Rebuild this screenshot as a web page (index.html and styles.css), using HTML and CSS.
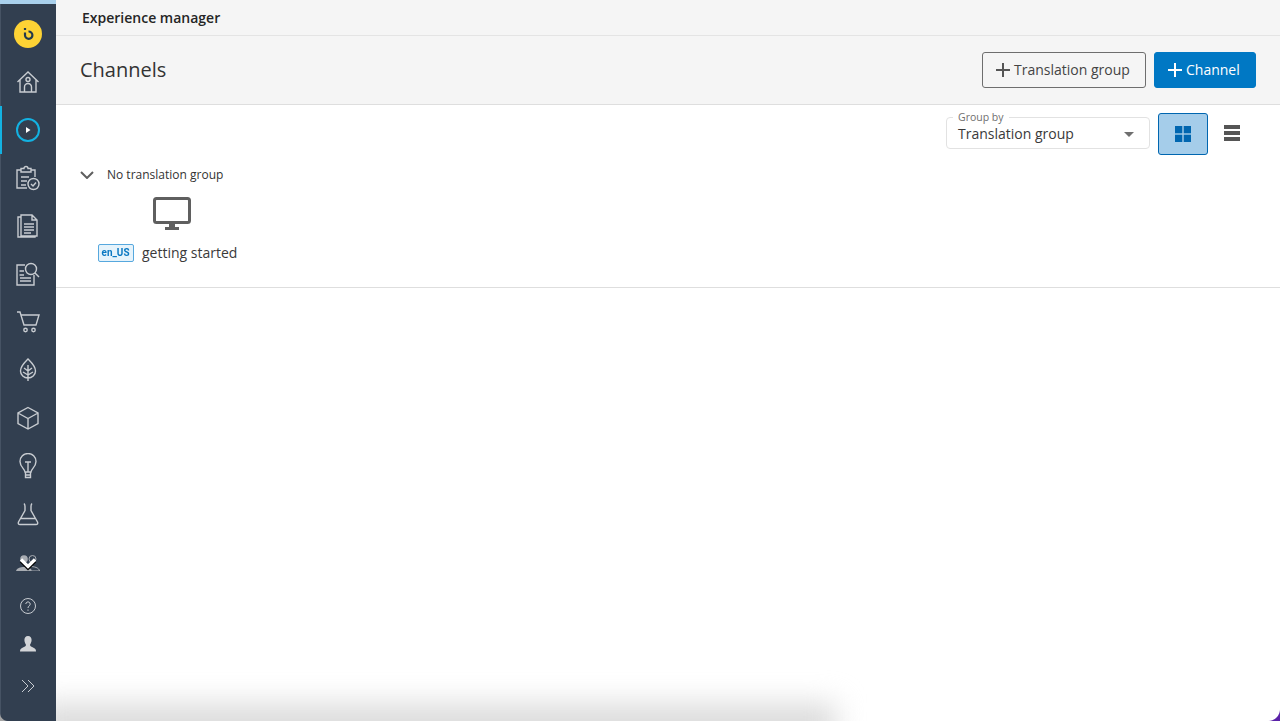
FILE: index.html
```html
<!DOCTYPE html>
<html lang="en">
<head>
<meta charset="utf-8">
<title>Channels</title>
<link rel="stylesheet" href="styles.css">
</head>
<body>
<div class="app">
  <nav class="sidebar">
    <div class="nav-main">
      <div class="nav-item"><svg class="logo" width="28" height="28" viewBox="0 0 28 28"><circle cx="14" cy="14" r="14" fill="#fdd335"/><path d="M11 8v2" stroke="#233a4d" stroke-width="2.200" fill="none"/><path d="M14.500 11.500a3.700 3.700 0 1 1-3.500 3.700v-2.700" stroke="#233a4d" stroke-width="2.200" fill="none"/></svg></div>
      <div class="nav-item"><svg class="ic" width="24" height="24" viewBox="0 0 24 24"><path d="M1.500 12 12 2l10.500 10M4 10v12h16V10M8.500 22v-5a3.500 3.500 0 0 1 7 0v5"/><circle cx="12" cy="9.500" r="2"/></svg></div>
      <div class="nav-item active"><svg width="24" height="24" viewBox="0 0 24 24"><circle cx="12" cy="12" r="11" fill="none" stroke="#13b2e2" stroke-width="2"/><path d="M10 9l4.500 3-4.500 3z" fill="#fff"/></svg></div>
      <div class="nav-item"><svg class="ic" width="24" height="26" viewBox="0 0 24 26"><path d="M11 23H1V5h4M15 5h4v7M5 3.500h3a2 2 0 0 1 4 0h3v3.500H5zM5 12h8M5 16h6M5 20h5"/><circle cx="17.500" cy="19" r="5.500"/><path d="M15 19l2 2 3-3.500"/></svg></div>
      <div class="nav-item"><svg class="ic" width="22" height="24" viewBox="0 0 22 24"><path d="M1 3h3v19h14v1H1zM4 1h11l5 5v16H4zM15 1v5h5M7 10h10M7 13h10M7 16h10M7 19h7"/></svg></div>
      <div class="nav-item"><svg class="ic" width="24" height="24" viewBox="0 0 24 24"><path d="M9 3H1v20h17V13M3.500 9H8M3.500 13H8M4 16h11M4 19h11"/><circle cx="15" cy="7" r="5.500"/><path d="M19 11l4 4"/></svg></div>
      <div class="nav-item"><svg class="ic" width="24" height="22" viewBox="0 0 24 22"><path d="M1 1h3l4 13h12l3-10H5"/><circle cx="9.500" cy="19" r="1.700"/><circle cx="17.500" cy="19" r="1.700"/></svg></div>
      <div class="nav-item"><svg class="ic" width="18" height="24" viewBox="0 0 18 24"><path d="M9 1C6 4 1.500 8 1.500 13c0 4 3.500 7 7.500 7s7.500-3 7.500-7C16.500 8 12 4 9 1zM9 7v16M9 13 5 10M9 13l4-3M9 17l-5-3M9 17l5-3"/></svg></div>
      <div class="nav-item"><svg class="ic" width="24" height="24" viewBox="0 0 24 24"><path d="M12 1.500 22 7v10.500l-10 5.500-10-5.500V7zM2 7l10 5.500L22 7M12 12.500V23"/></svg></div>
      <div class="nav-item"><svg class="ic" width="18" height="26" viewBox="0 0 18 26"><path d="M6 19c0-3-5-5-5-10.500a8 8 0 0 1 16 0C17 14 12 16 12 19zM6.500 19v5.500h5V19M6.500 22h5M6 9h6M9 9v10"/></svg></div>
      <div class="nav-item"><svg class="ic" width="22" height="24" viewBox="0 0 22 24"><path d="M7 1.500c1 1 1 2 1 3v4L1.500 20c-.6 1.500 0 2.500 1.500 2.500h16c1.500 0 2.100-1 1.500-2.500L14 8.500v-4c0-1 0-2 1-3M4 16.500h14"/></svg></div>
      <div class="nav-item nav-clip">
        <svg class="ic-dim" width="24" height="17" viewBox="0 0 24 17"><circle cx="8" cy="5" r="3.800" fill="#a9adb3"/><path d="M0 17c1-3 4-4 8-4s7 1 8 4z" fill="#a9adb3"/><circle cx="16.500" cy="5" r="3.500" fill="none" stroke="#a9adb3"/><path d="M14 12.500c4 0 9 1 9.500 4.500H16" fill="none" stroke="#a9adb3"/></svg>
        <svg class="more" width="20" height="16" viewBox="0 0 20 16"><path d="M3 4l7 7 7-7" fill="none" stroke="#000" stroke-width="3.500"/><path d="M3 2.500l7 7 7-7" fill="none" stroke="#fff" stroke-width="3.200"/></svg>
      </div>
    </div>
    <div class="nav-bottom">
      <svg class="ic-thin" width="18" height="18" viewBox="0 0 18 18"><circle cx="9" cy="9" r="7.500"/><path d="M6.800 7a2.200 2.200 0 1 1 3.300 2c-.8.500-1.100 1-1.100 2M9 12.500v1.300"/></svg>
      <svg class="user" width="18" height="18" viewBox="0 0 18 18"><path d="M9 1c2.500 0 3.600 2 3.600 4S11.500 9 11 9.800c0 1.500 1.500 2 3.500 3 2 .8 2.500 1.700 2.500 3.700H1c0-2 .5-2.900 2.500-3.700 2-1 3.500-1.500 3.500-3C6.500 9 5.400 7 5.400 5S6.500 1 9 1z" fill="#d3d5d8"/></svg>
      <svg class="ic-thin chev" width="14" height="14" viewBox="0 0 14 14"><path d="M1 1l6 6-6 6M7 1l6 6-6 6"/></svg>
    </div>
    <span class="corner-left"></span>
  </nav>
  <main class="main">
    <div class="appbar">Experience manager</div>
    <header class="page-head">
      <h1 class="title">Channels</h1>
      <div class="actions">
        <button class="btn btn-outline"><svg width="16" height="16" viewBox="0 0 16 16"><path d="M8 1v14M1 8h14" stroke="#555" stroke-width="2"/></svg><span class="btn-text">Translation group</span></button>
        <button class="btn btn-primary"><svg width="16" height="16" viewBox="0 0 16 16"><path d="M8 1v14M1 8h14" stroke="#fff" stroke-width="2"/></svg><span class="btn-text">Channel</span></button>
      </div>
    </header>
    <div class="toolbar">
      <div class="select">
        <span class="select-label">Group by</span>
        <span class="select-value">Translation group</span>
        <span class="caret"></span>
      </div>
      <button class="view view-on"><svg width="16" height="16" viewBox="0 0 16 16" fill="#0066b0"><rect width="7.300" height="7.300"/><rect x="8.700" width="7.300" height="7.300"/><rect y="8.700" width="7.300" height="7.300"/><rect x="8.700" y="8.700" width="7.300" height="7.300"/></svg></button>
      <button class="view view-list"><svg width="16" height="16" viewBox="0 0 16 16" fill="#555"><rect width="16" height="4"/><rect y="6" width="16" height="4"/><rect y="12" width="16" height="4"/></svg></button>
    </div>
    <section class="group">
      <div class="group-head">
        <svg width="14" height="8" viewBox="0 0 14 8"><path d="M1 1l6 6 6-6" fill="none" stroke="#5f5f5f" stroke-width="2"/></svg>
        <span>No translation group</span>
      </div>
      <div class="card">
        <svg class="monitor" width="38" height="35" viewBox="0 0 38 35"><rect x="1.500" y="1.500" width="35" height="24" rx="2" fill="none" stroke="#5f5f5f" stroke-width="3"/><path d="M16 26h6v4h-6zM12 30h14v3H12z" fill="#5f5f5f"/></svg>
        <div class="card-label"><span class="locale"><span class="locale-text">en_US</span></span><span class="card-name">getting started</span></div>
      </div>
    </section>
    <div class="bottom-shade"></div>
    <span class="corner-right"></span>
  </main>
</div>
</body>
</html>
```
FILE: styles.css
```css
* { box-sizing: border-box; }
html, body { margin: 0; height: 100%; overflow: hidden; }
body { font-family: "Open Sans", "Noto Sans", sans-serif; color: #333; background: #fff; }
.app { display: flex; height: 721px; }
.sidebar {
  width: 56px; flex: none; display: flex; flex-direction: column; position: relative;
  background: #323f50; border-top: 4px solid #a9d0ec;
  box-shadow: inset 1px 0 0 #465364;
  padding-top: 6px;
}
.nav-main { display: flex; flex-direction: column; }
.nav-item { height: 48px; display: flex; align-items: center; justify-content: center; position: relative; flex: none; }
.nav-item.active { box-shadow: inset 2px 0 0 #13b2e2; }
.ic { fill: none; stroke: #c8ccd1; stroke-width: 1.400; }
.ic-thin { fill: none; stroke: #c8ccd1; stroke-width: 1; }
.nav-clip .more { position: absolute; left: 18px; top: 19px; }
.nav-bottom { display: flex; flex-direction: column; align-items: center; margin-top: 11px; }
.user { margin-top: 20px; }
.chev { margin-top: 26px; }
.corner-left {
  position: absolute; left: 0; bottom: 0; width: 8px; height: 8px;
  background: radial-gradient(circle at 100% 0, transparent 7.500px, #a5a5a5 8.500px);
}
.main { flex: 1; position: relative; min-width: 0; display: flex; flex-direction: column; overflow: hidden; }
.appbar {
  height: 36px; flex: none; background: #f5f5f5; border-bottom: 1px solid #e4e4e4;
  padding: 8px 0 0 26px; font-size: 14px; line-height: 19px; font-weight: 600; color: #252525;
}
.page-head {
  height: 69px; flex: none; background: #f5f5f5; border-bottom: 1px solid #dedede;
  display: flex; align-items: center; justify-content: space-between; padding: 0 24px;
}
.title { margin: 0 0 2px; font-size: 20px; line-height: 27px; font-weight: 400; color: #333; }
.actions { display: flex; gap: 8px; }
.btn {
  height: 36px; border-radius: 3px; font: 14px/19px "Open Sans", sans-serif;
  display: flex; align-items: center; gap: 3px; padding: 0 0 0 12px; white-space: nowrap;
}
.btn-text { margin-bottom: 2px; }
.btn-outline { width: 164px; background: #f5f5f5; border: 1px solid #6e6e6e; color: #444; }
.btn-primary { width: 102px; background: #0078c4; border: 1px solid #0078c4; color: #fff; }
.toolbar { display: flex; align-items: center; height: 58px; flex: none; padding-left: 890px; }
.select {
  flex: none; width: 204px; height: 32px; border: 1px solid #e2e2e2; border-radius: 4px; position: relative;
  margin-top: -2px; padding: 4px 11px; display: flex; align-items: center;
}
.select-label {
  position: absolute; left: 6px; top: -8px; padding: 0 5px; background: #fff;
  font-size: 10.500px; line-height: 14px; color: #6f6f6f;
}
.select-value { font-size: 14px; line-height: 19px; color: #3a3a3a; }
.caret {
  position: absolute; right: 15px; top: 14px; width: 0; height: 0;
  border-left: 5.500px solid transparent; border-right: 5.500px solid transparent; border-top: 5px solid #6f6f6f;
}
.view { flex: none; width: 50px; height: 42px; padding: 0; border: 1px solid transparent; background: none; display: flex; align-items: center; justify-content: center; border-radius: 3px; }
.view-on { margin-left: 8px; background: #a5cdea; border-color: #0066b0; }
.view-list { width: 48px; padding-bottom: 2px; }
.group { height: 125px; flex: none; border-bottom: 1px solid #dedede; padding: 4px 0 0 24px; }
.group-head { display: flex; align-items: center; gap: 13px; height: 16px; font-size: 12px; line-height: 16px; color: #333; }
.card { margin: 14px 0 0 18px; display: flex; flex-direction: column; align-items: flex-start; }
.monitor { display: block; margin-left: 55px; }
.card-label { display: flex; align-items: center; gap: 8px; margin-top: 11px; height: 19px; }
.locale {
  flex: none; width: 36px; height: 18px; border: 1px solid #56a8de; border-radius: 2px; background: #e6f3fb;
  display: flex; align-items: center; justify-content: center;
}
.locale-text { font: 700 11px/16px "Roboto", "Liberation Sans", sans-serif; color: #0a78c2; transform: scaleX(.9); }
.card-name { font-size: 14px; line-height: 19px; color: #3a3a3a; white-space: nowrap; }
.bottom-shade {
  position: absolute; left: -20px; bottom: -26px; width: 800px; height: 44px;
  background: #dcdcdc; filter: blur(14px);
  pointer-events: none;
}
.corner-right {
  position: absolute; right: 0; bottom: 0; width: 12px; height: 12px;
  background: radial-gradient(circle at 0 0, transparent 11.500px, #5a22a8 12.500px);
}
```
